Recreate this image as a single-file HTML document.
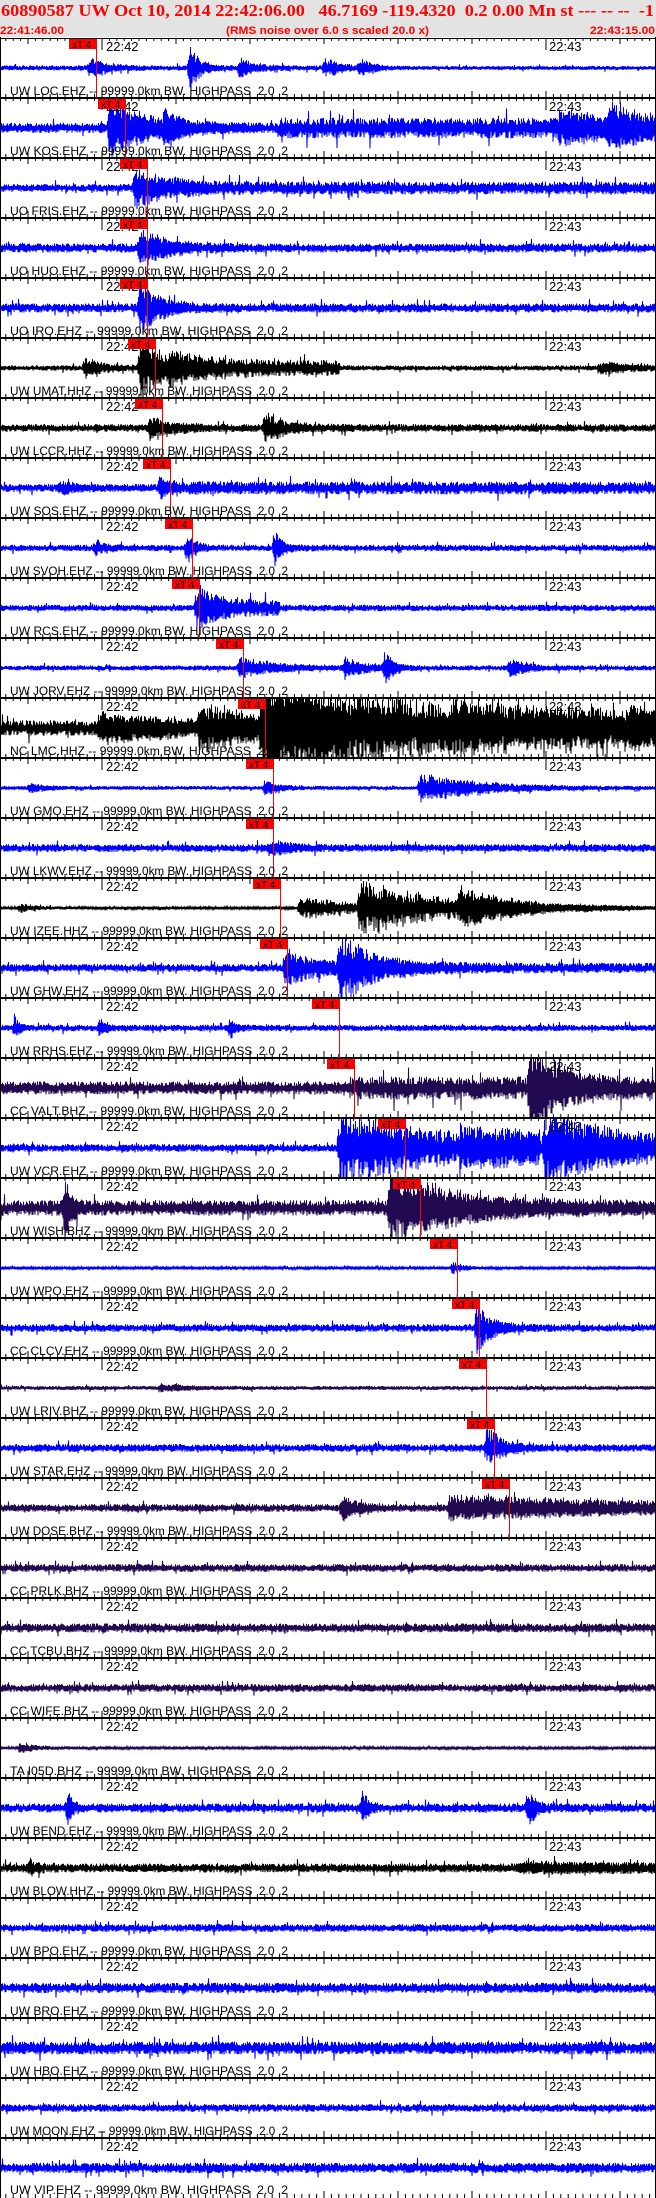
<!DOCTYPE html>
<html><head><meta charset="utf-8">
<style>
html,body{margin:0;padding:0;background:#fff;}
body{width:656px;height:2198px;overflow:hidden;}
svg{display:block;}
text{white-space:pre;}
</style></head>
<body>
<svg id="s" width="656" height="2198" viewBox="0 0 656 2198" xmlns="http://www.w3.org/2000/svg" xml:space="preserve">
<rect x="0" y="0" width="656" height="37" fill="#e3e3e3"/>
<text x="1" y="16" font-family="Liberation Serif, serif" font-weight="bold" font-size="17" fill="#ff0000" textLength="653" lengthAdjust="spacingAndGlyphs">60890587 UW Oct 10, 2014 22:42:06.00   46.7169 -119.4320  0.2 0.00 Mn st --- -- --  -1</text>
<text x="0" y="34" font-family="Liberation Sans, sans-serif" font-weight="bold" font-size="11" fill="#ff0000" textLength="64" lengthAdjust="spacingAndGlyphs">22:41:46.00</text>
<text x="226" y="34" font-family="Liberation Sans, sans-serif" font-weight="bold" font-size="11" fill="#ff0000" textLength="203" lengthAdjust="spacingAndGlyphs">(RMS noise over 6.0 s scaled 20.0 x)</text>
<text x="590" y="34" font-family="Liberation Sans, sans-serif" font-weight="bold" font-size="11" fill="#ff0000" textLength="65" lengthAdjust="spacingAndGlyphs">22:43:15.00</text>
<g id="g"></g>
</svg>
<script>
(function(){
var B="#0000ff",K="#000000",P="#220a50";
var T=[
["UW LOC.EHZ",B,2,[[90,10,15],[190,20,10],[240,8,15],[325,8,15],[360,6,15]],96,[[380,656,1.5]]],
["UW KOS.EHZ",B,4,[[110,25,35],[165,12,15],[560,10,60],[610,12,30]],125,[[280,656,8]]],
["UO FRIS.EHZ",B,3,[[135,18,30]],147,[[170,656,5]]],
["UO HUO.EHZ",B,3.5,[[140,18,25]],147,[]],
["UO IRO.EHZ",B,3.5,[[140,22,20]],147,[]],
["UW UMAT.HHZ",K,2,[[85,8,20],[140,25,40],[600,5,40]],155,[[170,340,6]]],
["UW LCCR.HHZ",K,3,[[150,8,25],[265,13,20]],162,[]],
["UW SOS.EHZ",B,3,[[60,5,15],[160,9,15]],170,[[190,656,5]]],
["UW SVOH.EHZ",B,2.5,[[95,6,10],[187,14,8],[275,14,8]],192,[]],
["UW RCS.EHZ",B,2.5,[[197,18,20]],199,[[200,280,6]]],
["UW JORV.EHZ",B,2,[[240,8,40],[345,8,20],[385,14,8],[510,8,15]],243,[]],
["NC LMC.HHZ",K,6,[[100,10,80],[200,16,60],[262,40,200],[630,10,30]],265,[[450,656,10]]],
["UW GMO.EHZ",B,1.5,[[30,4,15],[265,6,15],[420,12,60]],273,[]],
["UW LKWV.EHZ",B,3,[[270,6,20]],273,[]],
["UW IZEE.HHZ",K,1,[[20,4,15],[300,10,60],[360,22,90],[460,12,50]],280,[]],
["UW GHW.EHZ",B,3,[[285,15,40],[340,28,35]],287,[[400,656,4]]],
["UW RRHS.EHZ",B,2.5,[[15,8,5],[100,8,5],[230,8,5]],339,[]],
["CC VALT.BHZ",P,5,[[530,35,30]],354,[[350,656,9]]],
["UW VCR.EHZ",B,3,[[340,30,120],[545,25,100]],405,[[460,540,10]]],
["UW WISH.BHZ",P,6,[[65,25,6],[390,28,70]],420,[]],
["UW WPO.EHZ",B,1,[[453,6,10]],457,[]],
["CC CLCV.EHZ",B,3,[[477,20,15]],479,[]],
["UW LRIV.BHZ",P,1.5,[[160,3,30]],486,[]],
["UW STAR.EHZ",B,3,[[487,18,15]],494,[]],
["UW DOSE.BHZ",P,3,[[342,10,15],[450,10,200]],509,[]],
["CC PRLK.BHZ",P,3,[],0,[]],
["CC TCBU.BHZ",P,3.5,[],0,[]],
["CC WIFE.BHZ",P,3,[],0,[]],
["TA I05D.BHZ",P,1,[[20,4,20]],0,[]],
["UW BEND.EHZ",B,3.5,[[68,15,5],[363,15,5],[528,15,8]],0,[]],
["UW BLOW.HHZ",K,3.5,[[30,6,8],[520,3,200]],0,[]],
["UW BPO.EHZ",B,3,[],0,[]],
["UW BRO.EHZ",B,4,[],0,[]],
["UW HBO.EHZ",B,5,[],0,[]],
["UW MOON.EHZ",B,3,[],0,[]],
["UW VIP.EHZ",B,4,[],0,[]]
];
var seed=12345;function r(){seed=(seed*1103515245+12345)&0x7fffffff;return seed/0x7fffffff;}
var h="";
for(var k=0;k<T.length;k++){
 var t=T[k],top=37+60*k,c=top+31,d="",flip=1;
 for(var x=0;x<=656;x+=0.5){
  var base=t[2];
  for(var q=0;q<t[5].length;q++){var z=t[5][q];if(x>=z[0]&&x<z[1])base=z[2];}
  var e=base*(0.4+0.9*r());
  if(r()<0.03)e*=2;
  for(var j=0;j<t[3].length;j++){var ev=t[3][j];
   if(x>=ev[0]-3){var a=x<ev[0]?(x-ev[0]+3)/3:Math.exp(-(x-ev[0])/ev[2]);e+=ev[1]*a*(0.3+0.9*r());}}
  if(e>29)e=29;
  d+=(x==0?"M":"L")+x+" "+(c+flip*e).toFixed(1);
  flip=-flip;
 }
 h+='<path d="'+d+'" stroke="'+t[1]+'" stroke-width="1" fill="none"/>';
}
for(var k=0;k<=T.length;k++){
 var y=37+60*k;
 if(k<T.length) h+='<rect x="0" y="'+(k==0?38:y)+'" width="656" height="'+(k==0?1:2)+'" fill="#000"/>';
 var tk="";
 for(var s=-14;s<=75;s++){
  var x=(102+s*7.4).toFixed(1),maj=(s%10==0);
  var dn=maj?6:3,up=maj?7:4;
  if(s==0||s==60)dn=12;
  if(k<T.length) tk+="M"+x+" "+(y+1)+"V"+(y+1+dn);
  if(k>0) tk+="M"+x+" "+(y+1)+"V"+(y+1-up);
 }
 h+='<path d="'+tk+'" stroke="#000" stroke-width="1"/>';
}
h+='<rect x="0" y="37" width="1" height="2161" fill="#000"/><rect x="655" y="37" width="1" height="2161" fill="#000"/>';
for(var k=0;k<T.length;k++){
 var top=37+60*k,t=T[k];
 h+='<text x="106" y="'+(top+14)+'" font-family="Liberation Sans, sans-serif" font-size="13" fill="#000">22:42</text>';
 h+='<text x="549" y="'+(top+14)+'" font-family="Liberation Sans, sans-serif" font-size="13" fill="#000">22:43</text>';
 if(k>0){
  h+='<text x="10" y="'+(top-2)+'" font-family="Liberation Sans, sans-serif" font-size="12" fill="#000" textLength="278" lengthAdjust="spacingAndGlyphs">'+T[k-1][0]+' -- 99999.0km BW. HIGHPASS  2.0 .2</text>';
 }
 if(t[4]){
  var lx=t[4];
  h+='<rect x="'+(lx-27)+'" y="'+(top+2)+'" width="27" height="10" fill="#ff0000"/>';
  h+='<text x="'+(lx-24)+'" y="'+(top+11)+'" font-family="Liberation Sans, sans-serif" font-size="10" fill="#000">xT 4</text>';
  h+='<rect x="'+lx+'" y="'+(top+2)+'" width="1" height="59" fill="#ff0000"/>';
 }
}
var lastTop=37+60*(T.length-1);
h+='<text x="10" y="'+(lastTop+57)+'" font-family="Liberation Sans, sans-serif" font-size="12" fill="#000" textLength="278" lengthAdjust="spacingAndGlyphs">UW VIP.EHZ -- 99999.0km BW. HIGHPASS  2.0 .2</text>';
document.getElementById("g").innerHTML=h;
})();
</script>
</body></html>
